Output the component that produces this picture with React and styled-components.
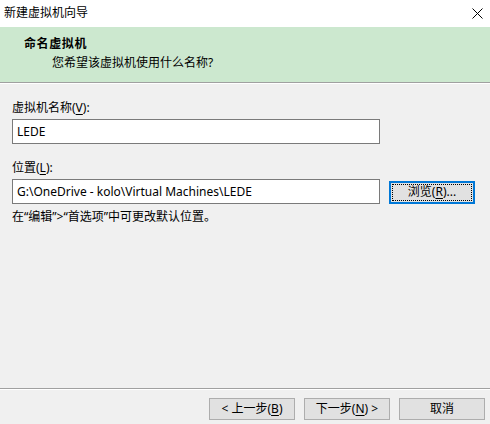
import React from 'react';
import styled, { createGlobalStyle } from 'styled-components';

const GlobalStyle = createGlobalStyle`
  html, body {
    margin: 0;
    padding: 0;
    background: #f0f0f0;
  }
  body {
    font-family: "Noto Sans", "Noto Sans CJK SC", sans-serif;
    font-size: 12px;
    color: #000;
  }
`;

const Window = styled.div`
  width: 490px;
  height: 424px;
  display: flex;
  flex-direction: column;
  background: #f0f0f0;
  overflow: hidden;
`;

const TitleBar = styled.div`
  height: 27px;
  flex: none;
  display: flex;
  align-items: center;
  justify-content: space-between;
  padding: 0 7px 1px 4px;
  box-sizing: border-box;
  background: #fff;
  line-height: 16px;
`;

const CloseIcon = () => (
  <svg width="11" height="11" viewBox="0 0 11 11">
    <path d="M0.5 0.5 L10.5 10.5 M10.5 0.5 L0.5 10.5" stroke="#000" strokeWidth="1" fill="none" />
  </svg>
);

const Header = styled.div`
  height: 56px;
  flex: none;
  box-sizing: border-box;
  background: #cce8cf;
  border-bottom: 1px solid #a0a0a0;
  padding: 9px 0 0 24px;
  line-height: 16px;
`;

const HeaderTitle = styled.div`
  font-weight: bold;
  letter-spacing: 0.6px;
`;

const HeaderSub = styled.div`
  margin: 3px 0 0 28px;
`;

const Body = styled.div`
  flex: 1;
  padding: 16px 12px 0 12px;
  line-height: 16px;
  border-top: 1px solid #fff;
`;

const Label = styled.div`
  margin-bottom: 3px;
  margin-top: ${p => p.$gap || 0}px;
`;

const Key = styled.span`
  text-decoration: underline;
  text-underline-offset: 2px;
`;

const Row = styled.div`
  display: flex;
  align-items: center;
  gap: 9px;
`;

const TextBox = styled.div`
  width: 368px;
  height: 25px;
  box-sizing: border-box;
  border: 1px solid #7a7a7a;
  background: #fff;
  padding: 0 4px;
  display: flex;
  align-items: center;
`;

const Button = styled.button`
  width: 86px;
  height: ${p => p.$h || 22}px;
  box-sizing: border-box;
  border: 1px solid #adadad;
  background: #e1e1e1;
  font: inherit;
  color: #000;
  padding: 0;
  line-height: 16px;
  display: flex;
  align-items: center;
  justify-content: center;
  position: relative;
  margin-top: ${p => p.$dy || 0}px;

  &.focused {
    border: 2px solid #0078d7;
  }
  &.focused::after {
    content: '';
    position: absolute;
    inset: 1px;
    border: 1px dotted #000;
  }
`;

const Hint = styled.div`
  margin-top: 5px;
`;

const Footer = styled.div`
  flex: none;
  height: 36px;
  border-top: 1px solid #a0a0a0;
  box-shadow: inset 0 1px 0 #fff;
  display: flex;
  justify-content: flex-end;
  gap: 9px;
  padding: 9px 5px 0 0;
  box-sizing: border-box;
`;

export default function App() {
  return (
    <>
      <GlobalStyle />
      <Window>
        <TitleBar>
          <span>新建虚拟机向导</span>
          <CloseIcon />
        </TitleBar>
        <Header>
          <HeaderTitle>命名虚拟机</HeaderTitle>
          <HeaderSub>您希望该虚拟机使用什么名称?</HeaderSub>
        </Header>
        <Body>
          <Label>虚拟机名称(<Key>V</Key>):</Label>
          <TextBox>LEDE</TextBox>
          <Label $gap={16}>位置(<Key>L</Key>):</Label>
          <Row>
            <TextBox>G:\OneDrive - kolo\Virtual Machines\LEDE</TextBox>
            <Button className="focused" $h={23} $dy={1}>浏览(<Key>R</Key>)...</Button>
          </Row>
          <Hint>在“编辑”&gt;“首选项”中可更改默认位置。</Hint>
        </Body>
        <Footer>
          <Button>&lt; 上一步(<Key>B</Key>)</Button>
          <Button>下一步(<Key>N</Key>) &gt;</Button>
          <Button>取消</Button>
        </Footer>
      </Window>
    </>
  );
}
